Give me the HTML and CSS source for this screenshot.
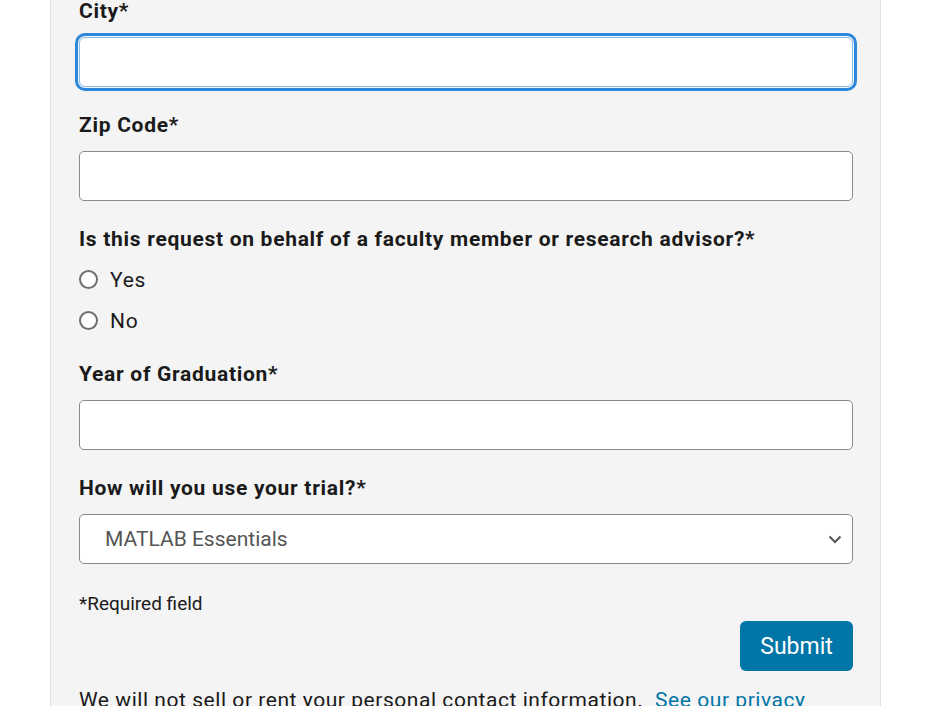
FILE: index.html
```html
<!DOCTYPE html>
<html lang="en">
<head>
<meta charset="utf-8">
<title>Trial request</title>
<link rel="stylesheet" href="styles.css">
</head>
<body>
<div class="panel">
  <form class="form">
    <div class="group first">
      <label class="label" for="city">City*</label>
      <input class="field focused" id="city" type="text">
    </div>
    <div class="group">
      <label class="label" for="zip">Zip Code*</label>
      <input class="field" id="zip" type="text">
    </div>
    <div class="group radios">
      <div class="label">Is this request on behalf of a faculty member or research advisor?*</div>
      <div class="options">
        <label class="option"><input type="radio" name="behalf" class="radio"><span>Yes</span></label>
        <label class="option"><input type="radio" name="behalf" class="radio"><span>No</span></label>
      </div>
    </div>
    <div class="group">
      <label class="label" for="year">Year of Graduation*</label>
      <input class="field" id="year" type="text">
    </div>
    <div class="group last">
      <label class="label" for="use">How will you use your trial?*</label>
      <div class="select-wrap">
        <select class="field select" id="use">
          <option>MATLAB Essentials</option>
        </select>
        <svg class="chevron" width="14" height="9" viewBox="0 0 14 9"><path d="M1.5 1.5 L7 7 L12.5 1.5" fill="none" stroke="#555" stroke-width="2"/></svg>
      </div>
    </div>
    <p class="required">*Required field</p>
    <div class="actions">
      <button type="button" class="submit">Submit</button>
    </div>
    <p class="note">We will not sell or rent your personal contact information. <a href="#" class="link">See our privacy policy</a> for details.</p>
  </form>
</div>
</body>
</html>
```
FILE: styles.css
```css
html, body {
  margin: 0;
  padding: 0;
  background: #ffffff;
  overflow: hidden;
}
body {
  font-family: Roboto, "Liberation Sans", Arial, sans-serif;
  color: #1a1a1a;
}
.panel {
  margin-left: 50px;
  width: 774px;
  padding: 0 27px 40px 28px;
  background: #f4f4f4;
  border-left: 1px solid #e3e3e3;
  border-right: 1px solid #e3e3e3;
  min-height: 760px;
}
.form {
  display: flex;
  flex-direction: column;
  width: 774px;
}
.group {
  display: flex;
  flex-direction: column;
  margin-bottom: 26px;
}
.group.first {
  margin-top: -1px;
}
.group.radios {
  margin-bottom: 21px;
}
.group.last {
  margin-bottom: 0;
}
.label {
  font-size: 21px;
  font-weight: 700;
  letter-spacing: 0.7px;
  line-height: 24px;
  margin-bottom: 14px;
  color: #1a1a1a;
}
.radios .label {
  margin-bottom: 0;
}
.field {
  box-sizing: border-box;
  width: 774px;
  height: 50px;
  border: 1px solid #8a8a8a;
  border-radius: 5px;
  background: #ffffff;
  font-family: inherit;
  font-size: 20px;
  margin: 0;
  padding: 0 12px;
}
.field.focused {
  border-color: #86bcec;
  border-radius: 6px;
  outline: 3px solid #2b88da;
  outline-offset: 1px;
}
.options {
  display: flex;
  flex-direction: column;
  padding-top: 8px;
}
.option {
  display: flex;
  align-items: center;
  height: 41px;
  font-size: 21px;
  letter-spacing: 0.7px;
  color: #1a1a1a;
}
.radio {
  appearance: none;
  -webkit-appearance: none;
  box-sizing: border-box;
  width: 19px;
  height: 19px;
  margin: 0 12px 0 0;
  border: 2px solid #6f6f6f;
  border-radius: 50%;
  background: #ffffff;
}
.select-wrap {
  position: relative;
  width: 774px;
}
.select {
  appearance: none;
  -webkit-appearance: none;
  padding-left: 25px;
  font-size: 21px;
  color: #555555;
  display: block;
}
.chevron {
  position: absolute;
  right: 11px;
  top: 21px;
}
.required {
  margin: 29px 0 0 0;
  font-size: 19px;
  line-height: 22px;
  color: #1a1a1a;
}
.actions {
  display: flex;
  justify-content: flex-end;
  margin-top: 6px;
}
.submit {
  width: 113px;
  height: 50px;
  border: none;
  border-radius: 6px;
  background: #0076a8;
  color: #ffffff;
  font-family: inherit;
  font-size: 23px;
  padding: 0;
}
.note {
  margin: 17px 0 0 0;
  font-size: 21px;
  letter-spacing: 0.55px;
  line-height: 24px;
  color: #1a1a1a;
}
.link {
  color: #0076a8;
  text-decoration: none;
  margin-left: 6px;
}
```
